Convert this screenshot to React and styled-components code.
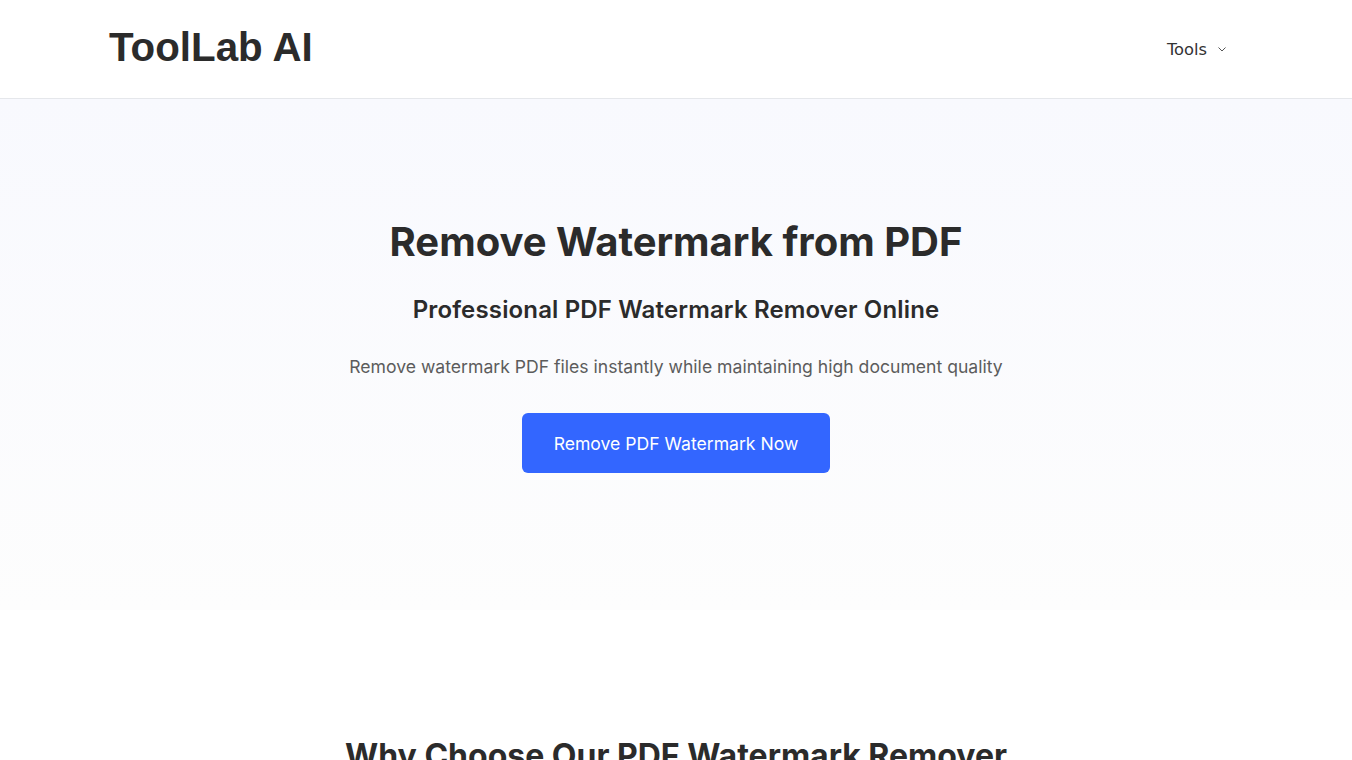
import React from "react";
import styled, { createGlobalStyle } from "styled-components";

const GlobalStyle = createGlobalStyle`
  * { box-sizing: border-box; }
  body {
    margin: 0;
    font-family: Inter, "Noto Sans", sans-serif;
    color: #2b2b2b;
    background: #ffffff;
  }
`;

const Header = styled.header`
  height: 99px;
  border-bottom: 1px solid #e5e7eb;
  background: #fff;
`;

const HeaderInner = styled.div`
  max-width: 1152px;
  margin: 0 auto;
  height: 100%;
  padding: 0 0 0 8px;
  display: flex;
  align-items: center;
  justify-content: space-between;
`;

const Logo = styled.a`
  font-family: "Liberation Sans", Arial, sans-serif;
  font-weight: 700;
  font-size: 40.3px;
  color: #2b2b2b;
  text-decoration: none;
  margin: -2px 0 0 1px;
`;

const NavItem = styled.button`
  display: flex;
  align-items: center;
  gap: 10px;
  background: none;
  border: 0;
  padding: 0 25px 0 0;
  font-family: "DejaVu Sans", sans-serif;
  font-size: 16.3px;
  color: #333;
  cursor: pointer;
`;

const Hero = styled.section`
  background: linear-gradient(180deg, #f8f9fe 0%, #fdfdfd 100%);
  padding: 119px 24px 137px;
  text-align: center;
`;

const Title = styled.h1`
  margin: 0;
  font-size: 40px;
  line-height: 48px;
  font-weight: 700;
  color: #2b2b2b;
`;

const Subtitle = styled.h2`
  margin: 29px 0 0;
  font-size: 24px;
  line-height: 29px;
  font-weight: 600;
  letter-spacing: 0.15px;
  color: #2b2b2b;
`;

const Lead = styled.p`
  margin: 29px 0 0;
  font-size: 17.6px;
  line-height: 27px;
  color: #5c5c5c;
`;

const CTA = styled.a`
  display: inline-flex;
  align-items: center;
  justify-content: center;
  margin-top: 33px;
  width: 308px;
  height: 60px;
  border-radius: 6px;
  background: #3366ff;
  color: #fff;
  font-size: 17.6px;
  text-decoration: none;
`;

const Features = styled.section`
  padding: 127px 24px 80px;
  text-align: center;
`;

const SectionTitle = styled.h2`
  margin: 0;
  font-size: 32px;
  line-height: 38px;
  font-weight: 700;
  color: #2b2b2b;
`;

function Chevron() {
  return (
    <svg width="10" height="10" viewBox="0 0 10 10" fill="none">
      <path d="M1.5 3.5 L5 7 L8.5 3.5" stroke="#555" strokeWidth="1" />
    </svg>
  );
}

export default function App() {
  return (
    <>
      <GlobalStyle />
      <Header>
        <HeaderInner>
          <Logo href="#">ToolLab AI</Logo>
          <NavItem>
            Tools <Chevron />
          </NavItem>
        </HeaderInner>
      </Header>
      <Hero>
        <Title>Remove Watermark from PDF</Title>
        <Subtitle>Professional PDF Watermark Remover Online</Subtitle>
        <Lead>Remove watermark PDF files instantly while maintaining high document quality</Lead>
        <CTA href="#">Remove PDF Watermark Now</CTA>
      </Hero>
      <Features>
        <SectionTitle>Why Choose Our PDF Watermark Remover</SectionTitle>
      </Features>
    </>
  );
}
